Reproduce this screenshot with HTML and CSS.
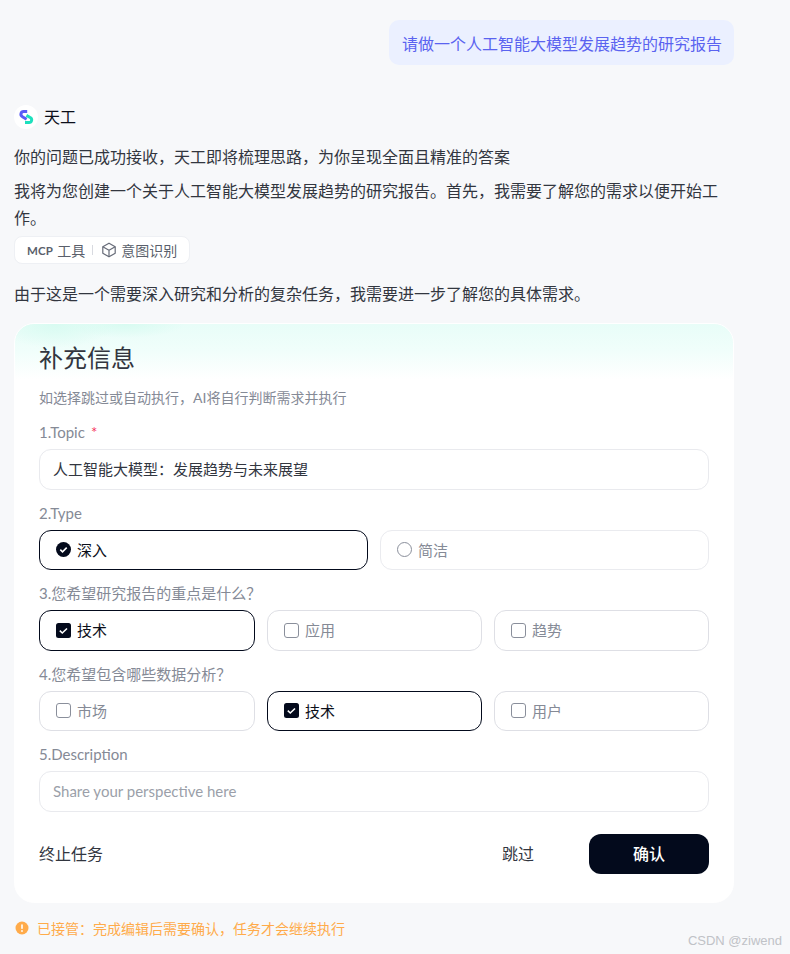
FILE: index.html
```html
<!DOCTYPE html>
<html lang="zh-CN">
<head>
<meta charset="utf-8">
<title>天工</title>
<link rel="stylesheet" href="styles.css">
</head>
<body>
<main class="chat">
  <div class="user-row"><div class="bubble">请做一个人工智能大模型发展趋势的研究报告</div></div>
  <div class="agent">
    <svg class="logo" viewBox="0 0 24 24" width="24" height="24" aria-hidden="true">
      <circle cx="12" cy="12" r="12" fill="#fff"/>
      <path d="M13.2 6.6 H9.6 A2.7 2.7 0 0 0 8.4 11.7 L12.6 14.2" fill="none" stroke="#5b5cf6" stroke-width="3"/>
      <path d="M11 17.6 H15 A2.7 2.7 0 0 0 16.2 12.5 L12.4 10.4" fill="none" stroke="#1de0bd" stroke-width="3"/>
    </svg>
    <span class="agent-name">天工</span>
  </div>
  <p class="msg msg-first">你的问题已成功接收，天工即将梳理思路，为你呈现全面且精准的答案</p>
  <p class="msg msg-second">我将为您创建一个关于人工智能大模型发展趋势的研究报告。首先，我需要了解您的需求以便开始工作。</p>
  <div class="chip">
    <span class="chip-mcp">MCP</span><span>工具</span><i class="chip-sep"></i>
    <svg class="chip-icon" viewBox="0 0 16 16" width="16" height="16" fill="none" stroke="#666b78" stroke-width="1.2" stroke-linejoin="round" aria-hidden="true">
      <path d="M8 1.2 14.2 4.7V11.3L8 14.8 1.8 11.3V4.7Z"/><path d="M1.8 4.7 8 8.2 14.2 4.7M8 8.2V14.8"/>
    </svg>
    <span>意图识别</span>
  </div>
  <p class="msg msg-third">由于这是一个需要深入研究和分析的复杂任务，我需要进一步了解您的具体需求。</p>

  <section class="card">
    <h1 class="card-title">补充信息</h1>
    <p class="card-sub">如选择跳过或自动执行，AI将自行判断需求并执行</p>

    <div class="field">
      <div class="label">1.Topic<span class="req">*</span></div>
      <div class="input">人工智能大模型：发展趋势与未来展望</div>
    </div>
    <div class="field">
      <div class="label">2.Type</div>
      <div class="opts opts-2">
        <div class="opt on"><svg class="mark" viewBox="0 0 15 15" width="15" height="15" aria-hidden="true"><circle cx="7.5" cy="7.5" r="7.5" fill="#030a1c"/><path d="M4.3 7.7 6.5 9.8 10.7 5.6" fill="none" stroke="#fff" stroke-width="1.6"/></svg>深入</div>
        <div class="opt off faint"><svg class="mark" viewBox="0 0 15 15" width="15" height="15" aria-hidden="true"><circle cx="7.5" cy="7.5" r="7" fill="none" stroke="#8a8f9b"/></svg>简洁</div>
      </div>
    </div>
    <div class="field">
      <div class="label">3.您希望研究报告的重点是什么？</div>
      <div class="opts opts-3">
        <div class="opt on"><svg class="mark" viewBox="0 0 15 15" width="15" height="15" aria-hidden="true"><rect width="15" height="15" rx="2.5" fill="#030a1c"/><path d="M3.8 7.7 6.3 10 11 5.5" fill="none" stroke="#fff" stroke-width="1.6"/></svg>技术</div>
        <div class="opt off"><svg class="mark" viewBox="0 0 15 15" width="15" height="15" aria-hidden="true"><rect x=".5" y=".5" width="14" height="14" rx="2.5" fill="none" stroke="#8a8f9b"/></svg>应用</div>
        <div class="opt off"><svg class="mark" viewBox="0 0 15 15" width="15" height="15" aria-hidden="true"><rect x=".5" y=".5" width="14" height="14" rx="2.5" fill="none" stroke="#8a8f9b"/></svg>趋势</div>
      </div>
    </div>
    <div class="field">
      <div class="label">4.您希望包含哪些数据分析？</div>
      <div class="opts opts-3">
        <div class="opt off"><svg class="mark" viewBox="0 0 15 15" width="15" height="15" aria-hidden="true"><rect x=".5" y=".5" width="14" height="14" rx="2.5" fill="none" stroke="#8a8f9b"/></svg>市场</div>
        <div class="opt on"><svg class="mark" viewBox="0 0 15 15" width="15" height="15" aria-hidden="true"><rect width="15" height="15" rx="2.5" fill="#030a1c"/><path d="M3.8 7.7 6.3 10 11 5.5" fill="none" stroke="#fff" stroke-width="1.6"/></svg>技术</div>
        <div class="opt off"><svg class="mark" viewBox="0 0 15 15" width="15" height="15" aria-hidden="true"><rect x=".5" y=".5" width="14" height="14" rx="2.5" fill="none" stroke="#8a8f9b"/></svg>用户</div>
      </div>
    </div>
    <div class="field">
      <div class="label">5.Description</div>
      <div class="input placeholder">Share your perspective here</div>
    </div>

    <div class="actions">
      <span class="stop">终止任务</span>
      <span class="skip">跳过</span>
      <span class="confirm">确认</span>
    </div>
  </section>

  <div class="notice">
    <svg class="notice-icon" viewBox="0 0 14 14" width="14" height="14" aria-hidden="true"><circle cx="7" cy="7" r="6.5" fill="#ffab4a"/><rect x="6.2" y="3.2" width="1.6" height="4.8" rx=".8" fill="#fff"/><circle cx="7" cy="10" r=".9" fill="#fff"/></svg>
    <span>已接管：完成编辑后需要确认，任务才会继续执行</span>
  </div>
</main>
<div class="watermark">CSDN @ziwend</div>
</body>
</html>
```

FILE: styles.css
```css
* { box-sizing: border-box; }
html, body { margin: 0; padding: 0; }
body {
  width: 790px;
  height: 954px;
  overflow: hidden;
  position: relative;
  background: #f7f8fa;
  color: #32363f;
  font-family: Lato, "Noto Sans CJK SC", sans-serif;
  font-size: 16px;
}
.chat {
  width: 720px;
  margin-left: 14px;
  padding-top: 20px;
  display: flex;
  flex-direction: column;
}
.user-row { display: flex; justify-content: flex-end; }
.bubble {
  height: 45px;
  padding: 0 12px 0 13px;
  display: flex;
  align-items: center;
  background: #ebf0ff;
  border-radius: 10px;
  color: #5a63f0;
  white-space: nowrap;
}
.agent {
  margin-top: 40px;
  height: 24px;
  display: flex;
  align-items: center;
  gap: 6px;
}
.agent-name { color: #0b0f1a; line-height: 24px; }
.msg { margin: 0; line-height: 27px; }
.msg-first { margin-top: 14px; }
.msg-second { margin-top: 7px; }
.msg-third { margin-top: 16px; }
.chip {
  margin-top: 5px;
  align-self: flex-start;
  width: 176px;
  height: 28px;
  padding-left: 12px;
  display: flex;
  align-items: center;
  background: #fff;
  border: 1px solid #eef0f4;
  border-radius: 8px;
  color: #5a5f6b;
  font-size: 14px;
  white-space: nowrap;
}
.chip-mcp { font-size: 11.5px; font-weight: 700; letter-spacing: .2px; margin-right: 4px; }
.chip-sep { width: 1px; height: 10px; background: #d8dae0; margin: 0 8px 0 7px; }
.chip-icon { margin-right: 4px; }
.card {
  position: relative;
  margin-top: 16px;
  height: 580px;
  padding: 18px 24px 0;
  background:
    radial-gradient(ellipse 60px 24px at 40px 0, #d8fbf1 0%, rgba(216,251,241,0) 100%),
    radial-gradient(ellipse 60px 14px at 110px 0, #d8fbf1 0%, rgba(216,251,241,0) 100%),
    linear-gradient(180deg, #e8fdf8 0, #f1fefb 28px, #ffffff 56px);
  background-color: #fff;
  border: 1px solid #fff;
  border-radius: 20px;
}
.card-title { margin: 0; font-size: 24px; line-height: 32px; font-weight: 400; color: #32363f; }
.card-sub { margin: 14px 0 15px; font-size: 14px; line-height: 20px; color: #858a96; }
.field { margin-bottom: 14px; }
.label { height: 20px; line-height: 19px; font-size: 15px; color: #858a96; }
.req { color: #f5365c; margin-left: 6px; }
.input {
  margin-top: 6px;
  height: 40.5px;
  padding: 0 13px 1px;
  display: flex;
  align-items: center;
  background: #fff;
  border: 1px solid #e9eaee;
  border-radius: 12px;
  font-size: 15px;
  color: #32363f;
}
.placeholder { color: #9b9fa9; }
.opts { margin-top: 6px; display: grid; gap: 12px; }
.opts-2 { grid-template-columns: 1fr 1fr; }
.opts-3 { grid-template-columns: 216px 1fr 1fr; }
.opt {
  height: 40.5px;
  padding: 0 16px 1px;
  display: flex;
  align-items: center;
  gap: 6px;
  background: #fff;
  border-radius: 12px;
  font-size: 15px;
}
.on { border: 1px solid #030a1c; color: #0b0f1a; }
.off { border: 1px solid #dedfe5; color: #858a96; }
.faint { border-color: #eaebef; }
.mark { flex: none; position: relative; top: .5px; }
.actions {
  margin-top: 22.5px;
  height: 40px;
  display: flex;
  align-items: center;
  font-size: 16px;
  line-height: 22px;
}
.stop { flex: 1; padding-bottom: 1px; }
.skip { margin-right: 55px; padding-bottom: 1px; }
.confirm {
  width: 120px;
  height: 40px;
  padding-bottom: 1px;
  display: flex;
  align-items: center;
  justify-content: center;
  background: #030a1c;
  border-radius: 12px;
  color: #fff;
  font-weight: 500;
}
.notice {
  margin-top: 15px;
  height: 20px;
  display: flex;
  align-items: center;
  gap: 8px;
  font-size: 14px;
  color: #ffab4a;
  white-space: nowrap;
}
.notice-icon { flex: none; margin-left: 1px; }
.watermark {
  position: absolute;
  right: 8px;
  bottom: 4px;
  font-family: "Liberation Sans", sans-serif;
  font-size: 13px;
  line-height: 18px;
  color: #c0c2c7;
}
```
